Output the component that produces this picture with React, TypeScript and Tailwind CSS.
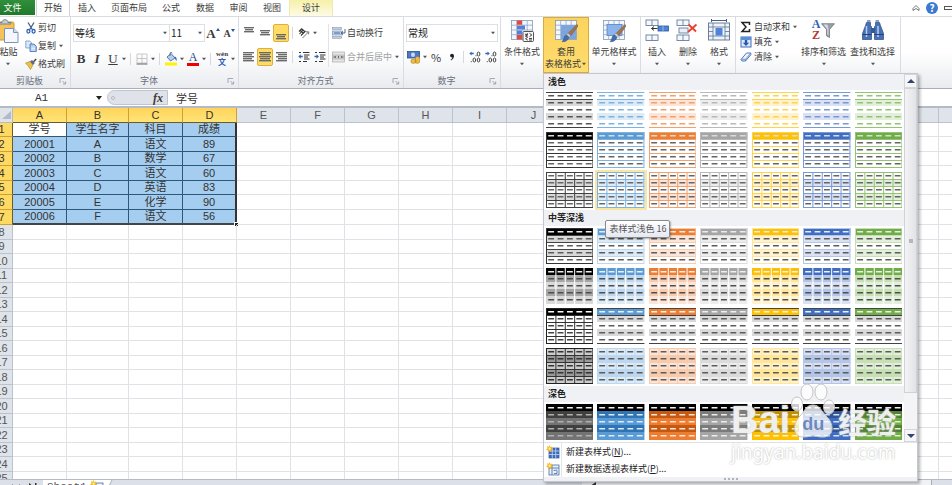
import React from 'react';
import clsx from 'clsx';

interface Palette {
  name: string;
  base: string;
  light: string;
  mid: string;
  strong: string;
  dark: string;
}

interface ThumbStyle {
  header?: string;
  bandA?: string;
  bandB?: string;
  rows?: string;
  cols?: string;
  outer?: string;
  edge?: string;
  headDash: string;
  dash: string;
}

type Kind = 'light1' | 'light2' | 'light3' | 'medium1' | 'medium2' | 'medium3' | 'medium4' | 'dark1';

const palettes: Palette[] = [
  { name: '黑色', base: '#000000', light: '#d9d9d9', mid: '#bfbfbf', strong: '#404040', dark: '#404040' },
  { name: '蓝色', base: '#5b9bd5', light: '#ddebf7', mid: '#bdd7ee', strong: '#7db3e2', dark: '#2f75b5' },
  { name: '橙色', base: '#ed7d31', light: '#fce4d6', mid: '#f8cbad', strong: '#f2a06c', dark: '#c65911' },
  { name: '灰色', base: '#a5a5a5', light: '#ededed', mid: '#dbdbdb', strong: '#b9b9b9', dark: '#7b7b7b' },
  { name: '金色', base: '#ffc000', light: '#fff2cc', mid: '#ffe699', strong: '#ffd34d', dark: '#bf8f00' },
  { name: '深蓝', base: '#3f6dc3', light: '#d9e1f2', mid: '#b4c6e7', strong: '#7998d6', dark: '#305496' },
  { name: '绿色', base: '#70ad47', light: '#e2efda', mid: '#c6e0b4', strong: '#93c472', dark: '#548235' },
];

const sections: { title: string; kinds: Kind[] }[] = [
  { title: '浅色', kinds: ['light1', 'light2', 'light3'] },
  { title: '中等深浅', kinds: ['medium1', 'medium2', 'medium3', 'medium4'] },
  { title: '深色', kinds: ['dark1'] },
];

const getThumbStyle = (kind: Kind, p: Palette): ThumbStyle => {
  const black = p.base === '#000000';
  switch (kind) {
    case 'light1':
      return { bandA: p.light, edge: p.strong, headDash: black ? '#555' : p.strong, dash: black ? '#555' : p.strong };
    case 'light2':
      return { header: p.base, rows: black ? '#333' : p.strong, outer: black ? '#333' : p.strong, headDash: '#d6dbe0', dash: '#666' };
    case 'light3':
      return { bandA: p.light, rows: p.strong, cols: p.strong, outer: p.strong, headDash: '#666', dash: '#666' };
    case 'medium1':
      return { header: p.base, bandA: p.light, rows: black ? '#444' : p.mid, outer: black ? '#333' : p.mid, headDash: '#e8ecf0', dash: '#5c5c5c' };
    case 'medium2':
      return { header: p.base, bandA: black ? '#a6a6a6' : p.mid, bandB: p.light, cols: '#ffffff', headDash: '#f0f0f0', dash: '#4f4f4f' };
    case 'medium3':
      return black
        ? { header: '#000', rows: '#333', cols: '#333', outer: '#222', headDash: '#fff', dash: '#444' }
        : { header: p.base, bandA: '#d9d9d9', edge: '#444', headDash: '#f0f0f0', dash: '#5c5c5c' };
    case 'medium4':
      return black
        ? { header: '#ccc', bandA: '#999', bandB: '#ccc', rows: '#333', cols: '#333', outer: '#222', headDash: '#333', dash: '#333' }
        : { header: p.light, bandA: p.mid, bandB: p.light, rows: p.mid, cols: p.mid, outer: p.mid, headDash: '#5c5c5c', dash: '#5c5c5c' };
    default:
      return { header: '#000', bandA: p.dark, bandB: black ? '#737373' : p.base, headDash: '#f0f0f0', dash: black ? '#b0b0b0' : p.light };
  }
};

const Thumb: React.FC<{ style: ThumbStyle }> = ({ style: s }) => (
  <svg viewBox="0 0 47 36" preserveAspectRatio="none" className="block h-9 w-full" aria-hidden="true">
    <rect width="47" height="36" fill="#fff" />
    {[0, 1, 2, 3, 4].map(r => {
      const fill = r === 0 ? s.header : r % 2 === 1 ? s.bandA : s.bandB;
      return fill ? <rect key={r} y={r * 7} width="47" height={r === 4 ? 8 : 7} fill={fill} /> : null;
    })}
    {s.rows && [7, 14, 21, 28].map(y => <rect key={y} y={y} width="47" height="1" fill={s.rows} />)}
    {s.cols && [1, 2, 3, 4].map(c => <rect key={c} x={c * 9.3} y={s.cols === '#333' && s.header === '#000' ? 7 : 0} width="1" height="36" fill={s.cols} />)}
    {s.outer && <rect x="0.5" y="0.5" width="46" height="35" fill="none" stroke={s.outer} />}
    {s.edge && [0, 7, 35].map(y => <rect key={y} y={y} width="47" height="1" fill={s.edge} />)}
    {[0, 1, 2, 3, 4].map(r =>
      [0, 1, 2, 3, 4].map(c => (
        <rect key={`${r}-${c}`} x={2.2 + c * 9.3} y={r * 7 + 3} width="5.8" height="1.5" fill={r === 0 ? s.headDash : s.dash} />
      ))
    )}
  </svg>
);

/* ---------- small shared pieces ---------- */

const Caret = ({ className }: { className?: string }) => (
  <svg viewBox="0 0 6 4" className={clsx('h-1 w-1.5 shrink-0', className)} aria-hidden="true">
    <path d="M1 .8h4L3 3.2z" fill="#555" />
  </svg>
);

const Sep = () => <span className="mx-[3px] h-3 w-px shrink-0 bg-[#d5d8dd]" />;

const ToolButton: React.FC<{ label: string; active?: boolean; children: React.ReactNode }> = ({ label, active, children }) => (
  <button
    type="button"
    aria-label={label}
    className={clsx(
      'flex h-[18px] w-4 shrink-0 items-center justify-center rounded-[2px]',
      active && 'border border-[#dfae3c] bg-[#ffdc66]'
    )}
  >
    {children}
  </button>
);

const SmallButton: React.FC<{ icon: React.ReactNode; label: string; caret?: boolean; muted?: boolean; className?: string }> = ({ icon, label, caret, muted, className }) => (
  <button type="button" className={clsx('flex items-center whitespace-nowrap', muted && 'text-[#a0a0a0]', className)}>
    {icon}
    <span>{label}</span>
    {caret && <Caret className="ml-0.5" />}
  </button>
);

const BigButton: React.FC<{ icon: React.ReactNode; label: string; className?: string }> = ({ icon, label, className }) => (
  <button type="button" className={clsx('flex h-full shrink-0 flex-col items-center whitespace-nowrap pt-0.5 leading-[12px]', className)}>
    {icon}
    <span className="mt-[3px]">{label}</span>
    <Caret className="mt-1" />
  </button>
);

const Group: React.FC<{ title?: string; className?: string; children: React.ReactNode }> = ({ title, className, children }) => (
  <div className={clsx('flex shrink-0 flex-col border-r border-[#d9dce1]', className)}>
    <div className="flex h-14">{children}</div>
    <div className="flex h-[15px] items-center text-[#68707c]">
      {title && (
        <>
          <span className="flex-1 text-center">{title}</span>
          <button type="button" aria-label={`${title}选项`} className="w-[11px]">
            <svg viewBox="0 0 8 8" className="h-2 w-2" aria-hidden="true">
              <path d="M1 6V1.5h5M3.5 4l3 3M6.7 4.5V7H4" fill="none" stroke="#9aa1ac" strokeWidth=".9" />
            </svg>
          </button>
        </>
      )}
    </div>
  </div>
);

const Picker: React.FC<{ label: string; options: string[]; className?: string }> = ({ label, options, className }) => (
  <span className={clsx('relative flex h-[18px] border border-[#dcdfe4] bg-white', className)}>
    <select aria-label={label} className="w-full appearance-none bg-transparent pl-px text-[10px] leading-none text-[#222] outline-none">
      {options.map(o => (
        <option key={o}>{o}</option>
      ))}
    </select>
    <Caret className="pointer-events-none absolute right-px top-1.5" />
  </span>
);

/* ---------- icons ---------- */

const CutIcon = () => (
  <svg viewBox="0 0 12 12" className="mr-px h-3 w-3" aria-hidden="true">
    <path d="M3 .5 7.6 8M9 .5 4.4 8" stroke="#4b5f80" strokeWidth="1.3" fill="none" />
    <ellipse cx="3.4" cy="9.3" rx="1.5" ry="1.8" fill="none" stroke="#2f66c0" strokeWidth="1.3" />
    <ellipse cx="8.6" cy="9.3" rx="1.5" ry="1.8" fill="none" stroke="#2f66c0" strokeWidth="1.3" />
  </svg>
);

const CopyIcon = () => (
  <svg viewBox="0 0 12 12" className="mr-px h-3 w-3" aria-hidden="true">
    <path d="M.8 1h4l1.7 1.7V8H.8z" fill="#dce9f8" stroke="#6f94c8" strokeWidth=".8" />
    <path d="M5 4h4l2.3 2.3v5.2H5z" fill="#a9c8ee" stroke="#3f6fb4" strokeWidth=".8" />
    <path d="M6.2 7h3.8M6.2 8.5h3.8M6.2 10h3.8" stroke="#fff" strokeWidth=".7" />
  </svg>
);

const BrushIcon = () => (
  <svg viewBox="0 0 12 12" className="mr-px h-3 w-3" aria-hidden="true">
    <path d="M.5 5 5 3.5l3 3.5-2.5 4.5C4 9 2.5 7 .5 5z" fill="#eac24a" stroke="#a8862a" strokeWidth=".6" />
    <path d="M5 3.5 7 2l2.8 3L8 7z" fill="#626b7b" />
    <path d="m8 3.2 2.7-2.7 1 1-2.6 2.8z" fill="#3c4352" />
  </svg>
);

const PasteIcon = () => (
  <svg viewBox="0 0 24 24" className="h-6 w-6 shrink-0" aria-hidden="true">
    <rect x="0" y="3" width="19" height="18" rx="1.5" fill="#f3c35a" stroke="#c99833" />
    <path d="M4 5h12V3.5h-3C13 1.5 11.5.7 10 .7S7 1.5 7 3.5H4z" fill="#c4cbd5" stroke="#6f7a8a" strokeWidth=".9" />
    <path d="M9.5 9.5h9l4.5 4v10H9.5z" fill="#f4f8fd" stroke="#7d94b4" />
    <path d="M18.5 9.5v4H23" fill="#cfdcec" stroke="#7d94b4" />
  </svg>
);

const Lines = ({ top, widths }: { top: number; widths: number[][] }) => (
  <svg viewBox="0 0 12 14" className="h-[14px] w-3" aria-hidden="true">
    {widths.map(([x, w], i) => (
      <rect key={i} x={x} y={top + i * 2} width={w} height="1.4" fill="#6a6a6a" />
    ))}
  </svg>
);

const OrientIcon = () => (
  <svg viewBox="0 0 12 12" className="h-3 w-3" aria-hidden="true">
    <path d="M1 4.5 4 1.5M1.5 7l3.5-4M3 8.5 7.5 4M2 3l3 3M4 1.8 7 5" stroke="#333" strokeWidth="1.1" fill="none" />
    <path d="M4.5 11 10.5 5M8 4.8h2.7v2.6" stroke="#777" fill="none" />
  </svg>
);

const WrapIcon = () => (
  <svg viewBox="0 0 14 12" className="mr-px h-3 w-[14px]" aria-hidden="true">
    <rect x=".5" y=".5" width="9" height="2" fill="#c9d0da" stroke="#7d8897" strokeWidth=".5" />
    <rect x=".5" y="4" width="10" height="4" fill="#bcd4f1" stroke="#5e88bf" strokeWidth=".6" />
    <rect x=".5" y="9.3" width="9" height="2" fill="#c9d0da" stroke="#7d8897" strokeWidth=".5" />
    <path d="M2 6h6M13 2v4h-3.5M10.7 4.5 9 6l1.7 1.5" stroke="#41597d" fill="none" strokeWidth=".9" />
  </svg>
);

const MergeIcon = () => (
  <svg viewBox="0 0 14 12" className="mr-px h-3 w-[14px]" aria-hidden="true">
    <rect x=".5" y="1" width="12" height="10" fill="#e6e6e6" stroke="#aaa" strokeWidth=".7" />
    <rect x=".5" y="4" width="12" height="4" fill="#cfcfcf" stroke="#aaa" strokeWidth=".6" />
    <path d="M1.5 6H4M9 6h2.5M3.3 5v2M9.7 5v2" stroke="#666" fill="none" strokeWidth=".9" />
    <path d="M6.5 5v2.2" stroke="#666" />
  </svg>
);

const IndentIcon = ({ right }: { right?: boolean }) => (
  <svg viewBox="0 0 12 12" className="h-3 w-3" aria-hidden="true">
    <path d="M1 1.5h2M5 1.5h6.5M6 4h5.5M6 6h4M6 8h5.5M1 10.5h2M5 10.5h4" stroke="#333" strokeWidth="1.2" />
    <path d={right ? 'M5 5.5 2.5 3.3v1.5H.5v1.5h2v1.5z' : 'M.3 5.5l2.5-2.2v1.5h2v1.5h-2v1.5z'} fill="#2f66c0" />
  </svg>
);

const BorderIcon = () => (
  <svg viewBox="0 0 12 12" className="h-3 w-3" aria-hidden="true">
    <path d="M1 1h10v9H1zM6 1v9M1 5.5h10" stroke="#bbb" strokeWidth=".8" fill="none" />
    <path d="M.5 11h11" stroke="#666" />
  </svg>
);

const FillIcon = () => (
  <svg viewBox="0 0 14 14" className="h-[14px] w-[14px] shrink-0" aria-hidden="true">
    <path d="M3 5 7 1.5 11 6 6.5 9z" fill="#b9cde9" stroke="#3d5e94" strokeWidth=".8" />
    <path d="M6 4V1.3C6 0 8 0 8 1.3" stroke="#3d5e94" fill="none" strokeWidth=".8" />
    <path d="M10.5 4.5c2 .5 2.5 2 2 4.5-1-1-1.5-2-2-4.5z" fill="#2f66c0" />
    <rect x="1" y="10.5" width="12" height="3" fill="#fff200" />
  </svg>
);

const CurrencyIcon = () => (
  <svg viewBox="0 0 14 14" className="h-[14px] w-[14px] shrink-0" aria-hidden="true">
    <rect x=".5" y="1.5" width="12" height="6.5" fill="#4d79c4" stroke="#2b4f94" strokeWidth=".8" />
    <ellipse cx="6" cy="4.7" rx="2" ry="2.2" fill="#c8d9f3" />
    <path d="M4 10c0-1 5-1 5 0v2.5c0 1-5 1-5 0zM8.5 7.5c0-1 4-1 4 0v5c0 1-4 1-4 0z" fill="#eebc45" stroke="#b0801d" strokeWidth=".6" />
  </svg>
);

const DecimalIcon = ({ less }: { less?: boolean }) => (
  <svg viewBox="0 0 12 12" className="h-3 w-3" aria-hidden="true">
    <path d={less ? 'M4.8 2.5 2.5.5v1.3H.3v1.4h2.2v1.3z' : 'M.3 2.5 2.6.5v1.3h2.2v1.4H2.6v1.3z'} fill="#2f66c0" />
    <ellipse cx="9.5" cy="3" rx="1.4" ry="2" fill="none" stroke="#444" />
    <ellipse cx="5.3" cy="9" rx="1.3" ry="2" fill="none" stroke="#444" />
    <ellipse cx="9.5" cy="9" rx="1.3" ry="2" fill="none" stroke="#444" />
    <rect x="6.5" y="4.2" width="1" height="1" fill="#444" />
    <rect x="1.8" y="10.2" width="1" height="1" fill="#444" />
  </svg>
);

const Sheet = ({ accent }: { accent?: boolean }) => (
  <>
    <rect x="1.5" y="1.5" width="21" height="19" fill="#f4f8fd" stroke="#8699b5" strokeWidth=".8" />
    {accent && <rect x="7" y="6" width="15" height="14" fill="#78a5e2" />}
    <path d="M6.7 1.5v19M12 1.5v19M17.2 1.5v19M1.5 6.2h21M1.5 11h21M1.5 15.7h21" stroke="#8fa6c6" strokeWidth=".8" />
  </>
);

const Paintbrush = () => (
  <>
    <path d="m23 5.5-9 9 2.5 2.5 7.5-10z" fill="#a8744a" stroke="#6d4a30" strokeWidth=".5" />
    <path d="m14 14 2.8 2.8-2 2-3-2.7z" fill="#c9ced6" stroke="#717a88" strokeWidth=".5" />
    <path d="M11.7 16.2c2 0 3.2 1.4 3 2.9-1.2 3-4.2 3.9-6.7 3.5 2.2-1.6 1.5-5 3.7-6.4z" fill="#416fae" stroke="#2c4e80" strokeWidth=".5" />
  </>
);

const CondIcon = () => (
  <svg viewBox="0 0 24 24" className="h-6 w-6" aria-hidden="true">
    <Sheet />
    <path d="M7 1.5h5v9H7zM7 16h5v4.5H7z" fill="#e2483c" />
    <path d="M7 6.5h8v4H7zM7 11h5v4.5H7z" fill="#4f82d8" />
    <path d="M7 6.2h5M12 11h-5" stroke="#fff" strokeWidth=".6" />
    <rect x="13" y="12.5" width="10.5" height="10" rx="1" fill="#f6f6f6" stroke="#555" />
    <path d="M15 15.3h3M15 17h3M16 18l1.5-3.600M19.5 14.3l2.300 1.700-2.300 1.700M17.800 18.400 15.500 19.700l2.300 1.500M19 19.500h3M19 21h3" stroke="#333" fill="none" strokeWidth=".9" />
  </svg>
);

const TableIcon = () => (
  <svg viewBox="0 0 24 24" className="h-6 w-6" aria-hidden="true">
    <Sheet accent />
    <Paintbrush />
  </svg>
);

const CellStyleIcon = () => (
  <svg viewBox="0 0 24 24" className="h-6 w-6" aria-hidden="true">
    <Sheet />
    <rect x="5" y="5.5" width="15" height="11" fill="#8bb4ec" stroke="#5a83bf" strokeWidth=".8" />
    <Paintbrush />
  </svg>
);

const MiniSheets = () => (
  <>
    {[1, 16].map(y => (
      <g key={y}>
        <rect x="1" y={y} width="12" height="5.5" fill="#f4f8fd" stroke="#6b7f9c" strokeWidth=".9" />
        <path d={`M7 ${y}v5.5`} stroke="#6b7f9c" strokeWidth=".9" />
      </g>
    ))}
  </>
);

const InsertIcon = () => (
  <svg viewBox="0 0 24 24" className="h-6 w-6" aria-hidden="true">
    <MiniSheets />
    <rect x="13" y="7" width="10.5" height="5" fill="#4f82d8" stroke="#2f5597" strokeWidth=".8" />
    <path d="M18 7v5" stroke="#bcd2f4" strokeWidth=".7" />
    <path d="M12.5 9.5H6.5M9 7.5l-2.5 2L9 11.5" stroke="#333" fill="none" />
  </svg>
);

const DeleteIcon = () => (
  <svg viewBox="0 0 24 24" className="h-6 w-6" aria-hidden="true">
    <MiniSheets />
    <rect x="3" y="9" width="9" height="5" fill="#e9eff8" stroke="#6b7f9c" strokeWidth=".9" />
    <path d="M12.5 5.5 20 12.5M20.5 5.5 12 13" stroke="#e8412f" strokeWidth="1.9" />
  </svg>
);

const FormatIcon = () => (
  <svg viewBox="0 0 24 24" className="h-6 w-6" aria-hidden="true">
    <path d="M4.5 0v3M19.5 0v3M4.5 1.5h15" stroke="#4b5f80" />
    <rect x="1.5" y="4" width="21" height="17" fill="#eef3fa" stroke="#6b7f9c" />
    <path d="M6 4v17M18 4v17M1.5 8h21M1.5 17h21M1.5 12.5H6M18 12.5h4.5" stroke="#6b7f9c" strokeWidth=".9" />
    <rect x="8.5" y="9" width="7" height="7.5" fill="#4f82d8" />
  </svg>
);

const SortIcon = () => (
  <span className="flex h-6 w-6 font-['Liberation_Serif',serif] text-[12px] font-bold leading-[11px]" aria-hidden="true">
    <span className="flex w-[9px] shrink-0 flex-col">
      <span className="text-[#2f5fb5]">A</span>
      <span className="text-[#b33a34]">Z</span>
    </span>
    <svg viewBox="0 0 14 16" className="mt-1 h-4 w-[14px] shrink-0">
      <path d="M.5.7h13l-5 5.8v8l-3-1.7V6.5z" fill="#9aa0a8" stroke="#646a73" strokeWidth=".7" />
      <path d="M2.500 1.400h4l1 5v6l-1.200-.8V6.200z" fill="#d6d9dd" />
    </svg>
  </span>
);

const FindIcon = () => (
  <svg viewBox="0 0 24 24" className="h-6 w-6" aria-hidden="true">
    <path d="M5.5 3.5h4v3l1 1v13h-9v-6l3-8z" fill="#4771b6" stroke="#2b4a82" strokeWidth=".7" />
    <path d="M18.5 3.5h-4v3l-1 1v13h9v-6l-3-8z" fill="#4771b6" stroke="#2b4a82" strokeWidth=".7" />
    <rect x="10" y="9" width="4" height="5" fill="#34588f" />
    <path d="M5.5 7v11M17 7v11" stroke="#b5cbee" strokeWidth="1.5" />
    <path d="M1.5 15.5h9M13.5 15.5h9M6 2h3.5M14.5 2H18" stroke="#24406f" />
  </svg>
);

const SumIcon = () => (
  <svg viewBox="0 0 12 12" className="mr-[2px] h-3 w-3" aria-hidden="true">
    <path d="M9.5 4V1.5H2L6 6l-4 4.5h7.5V8" stroke="#222" strokeWidth="1.5" fill="none" />
  </svg>
);

const FillDownIcon = () => (
  <svg viewBox="0 0 12 12" className="mr-[2px] h-3 w-3" aria-hidden="true">
    <rect x="1" y="1" width="10" height="10" fill="#dce8f8" stroke="#3f6fb4" />
    <rect x="1" y="1" width="10" height="3" fill="#5a8edb" />
    <path d="M6 10 2.8 6.8h2V4h2.4v2.8h2z" fill="#2458b8" />
  </svg>
);

const EraserIcon = () => (
  <svg viewBox="0 0 12 12" className="mr-[2px] h-3 w-3" aria-hidden="true">
    <path d="M1 8.5 6.5 2h4.3v1.8L5.5 10H2z" fill="#eef4fb" stroke="#4f78b8" />
    <path d="M1.5 8.3h4L10.5 2.5M5.5 8.5V10" stroke="#4f78b8" fill="none" strokeWidth=".8" />
  </svg>
);

const NewStyleIcon = ({ pivot }: { pivot?: boolean }) => (
  <svg viewBox="0 0 14 14" className="h-[14px] w-[14px] shrink-0" aria-hidden="true">
    <rect x="3" y="3" width="10" height="10" fill={pivot ? '#eaf1fb' : '#3f6dc3'} stroke="#35588f" strokeWidth=".7" />
    {pivot ? (
      <path d="M3 6h10M6 3v10M8 11.5h3v-3M7.5 8.5 11 8" stroke="#4f78b8" fill="none" strokeWidth=".9" />
    ) : (
      <path d="M3 6h10M3 9.5h10M6.3 3v10M9.7 3v10" stroke="#c4d7f5" strokeWidth=".8" />
    )}
    <path d="m3.5 0 .8 2 2-.6-.8 1.9 1.7 1-2 .7.3 2-1.9-1L2 7.3 1.8 5.2 0 4.5l1.6-1.2L.8 1.3l2 .5z" fill="#f5b91e" />
    <circle cx="3.6" cy="3.7" r="1.1" fill="#fff3b0" />
  </svg>
);

/* ---------- style gallery ---------- */

const StyleGallery = () => (
  <div
    role="menu"
    className="absolute left-0 top-full z-20 flex w-[375px] flex-col border border-[#c3c7cf] bg-white text-[#222] shadow-[2px_2px_3px_rgba(0,0,0,0.3)]"
  >
    <div className="flex">
      <div className="flex-1">
        {sections.map(section => (
          <section key={section.title}>
            <h3 className="h-4 bg-[#f0f1f5] pl-1 font-bold leading-4">{section.title}</h3>
            <div className="grid grid-cols-7 gap-1 px-0.5 py-0.5">
              {section.kinds.map(kind =>
                palettes.map((p, i) => {
                  const hovered = kind === 'light3' && i === 1;
                  return (
                    <div key={kind + p.name} className="relative">
                      <button
                        type="button"
                        aria-label={`${section.title} ${p.name}`}
                        className={clsx('block w-full', hovered && 'outline-2 outline-[#fbe8a0]')}
                      >
                        <Thumb style={getThumbStyle(kind, p)} />
                      </button>
                      {hovered && (
                        <span
                          role="tooltip"
                          className="absolute left-2 top-12 z-10 whitespace-nowrap rounded-[2px] border border-[#8a8a8a] bg-linear-to-b from-white to-[#e6e8f2] px-[3px] leading-4 text-[#555] shadow-[1px_1px_2px_rgba(0,0,0,0.3)]"
                        >
                          表样式浅色 16
                        </span>
                      )}
                    </div>
                  );
                })
              )}
            </div>
          </section>
        ))}
      </div>
      <div className="flex w-[13px] flex-col bg-[#f4f4f6]">
        <button type="button" aria-label="向上滚动" className="flex h-[14px] items-center justify-center border border-[#d4d6da] bg-[#f6f6f8]">
          <svg viewBox="0 0 8 4" className="h-1 w-2"><path d="M4 0l4 4H0z" fill="#33456b" /></svg>
        </button>
        <div className="flex flex-1 items-center justify-center border border-[#cfd2d8] bg-linear-to-r from-[#f4f4f6] to-[#e2e3e6]">
          <span className="h-1 w-1 bg-[#b5b7bb]" />
        </div>
        <div className="h-9" />
        <button type="button" aria-label="向下滚动" className="flex h-[13px] items-center justify-center border border-[#d4d6da] bg-[#f6f6f8]">
          <svg viewBox="0 0 8 4" className="h-1 w-2"><path d="M0 0h8L4 4z" fill="#33456b" /></svg>
        </button>
      </div>
    </div>
    <div className="flex flex-col border-t border-[#e0e2e6]">
      <button type="button" role="menuitem" className="flex h-[17px] items-center pl-0.5">
        <NewStyleIcon />
        <span className="ml-px flex h-full items-center border-l border-[#e2e4e8] pl-1">新建表样式(<u>N</u>)...</span>
      </button>
      <button type="button" role="menuitem" className="flex h-[17px] items-center pl-0.5">
        <NewStyleIcon pivot />
        <span className="ml-px flex h-full items-center border-l border-[#e2e4e8] pl-1">新建数据透视表样式(<u>P</u>)...</span>
      </button>
    </div>
    <div className="flex h-1 items-center justify-center gap-0.5 bg-[#f0f1f5]">
      {[0, 1, 2, 3].map(i => (
        <span key={i} className="h-0.5 w-0.5 bg-[#aeb3bc]" />
      ))}
    </div>
  </div>
);

/* ---------- ribbon ---------- */

const tabs = [
  { label: '插入', width: 'w-[34px]' },
  { label: '页面布局', width: 'w-[50px]' },
  { label: '公式', width: 'w-[34px]' },
  { label: '数据', width: 'w-[34px]' },
  { label: '审阅', width: 'w-[33px]' },
  { label: '视图', width: 'w-[34px]' },
];

const TabBar = () => (
  <nav className="flex h-4 shrink-0 items-stretch bg-white leading-[14px]">
    <button type="button" className="mb-px w-[35px] shrink-0 bg-linear-to-b from-[#2f8f3a] to-[#1f7a2c] pr-2.5 text-white">文件</button>
    <button type="button" className="ml-px w-[34px] shrink-0 border-x border-[#d0d4da]">开始</button>
    {tabs.map(t => (
      <button key={t.label} type="button" className={clsx('shrink-0', t.width)}>{t.label}</button>
    ))}
    <button type="button" className="w-11 shrink-0 border-x border-[#f0e9b0] bg-linear-to-b from-[#f6f0a8] to-[#fdfbe6]">设计</button>
    <div className="ml-auto flex items-center gap-1.5">
      <button type="button" aria-label="最小化功能区">
        <svg viewBox="0 0 8 8" className="h-2 w-2"><path d="M1 4.5 4 1.5l3 3v2L4 4.5l-3 2z" fill="#fff" stroke="#555" strokeWidth=".8" /></svg>
      </button>
      <button type="button" aria-label="帮助" className="h-3 w-3 rounded-full bg-[#3b78cf] text-center text-[10px] font-bold leading-3 text-white">?</button>
      <button type="button" aria-label="最小化" className="h-1 w-2 border border-r-0 border-[#555]" />
    </div>
  </nav>
);

const Ribbon = () => (
  <div className="relative z-10 flex shrink-0 border-y border-t-[#d8dbe0] border-b-[#a9aeb8] bg-linear-to-b from-white from-50% to-[#e9ebef]">
    <Group title="剪贴板" className="w-[71px]">
      <button type="button" className="flex w-[22px] shrink-0 flex-col items-center pt-0.5 leading-[12px]">
        <span className="-ml-2 block h-6"><PasteIcon /></span>
        <span className="-ml-[5px] mt-[3px] whitespace-nowrap">粘贴</span>
        <Caret className="-ml-1.5 mt-1" />
      </button>
      <div className="ml-[3px] flex flex-col pt-0.5">
        <SmallButton icon={<CutIcon />} label="剪切" className="h-[18px]" />
        <SmallButton icon={<CopyIcon />} label="复制" caret className="h-[18px]" />
        <SmallButton icon={<BrushIcon />} label="格式刷" className="h-[18px]" />
      </div>
    </Group>

    <Group title="字体" className="w-[168px]">
      <div className="flex flex-col gap-1.5 pl-0.5 pt-[7px]">
        <div className="flex">
          <Picker label="字体" options={['等线', '宋体']} className="w-[97px]" />
          <Picker label="字号" options={['11', '12', '14']} className="w-[35px] border-l-0" />
          <button type="button" aria-label="增大字号" className="flex w-4 items-center justify-center font-['Liberation_Serif',serif] text-[13px] font-bold">
            A<svg viewBox="0 0 4 4" className="mb-2 h-1 w-1"><path d="M2 0l2 3H0z" fill="#2f5597" /></svg>
          </button>
          <button type="button" aria-label="减小字号" className="flex w-4 items-center justify-center font-['Liberation_Serif',serif] text-[10px] font-bold">
            A<svg viewBox="0 0 4 4" className="mb-2 h-1 w-1"><path d="M0 1h4L2 4z" fill="#2f5597" /></svg>
          </button>
        </div>
        <div className="flex items-center font-['Liberation_Serif','Noto_Sans_CJK_SC',serif]">
          <ToolButton label="加粗"><b className="text-[13px]">B</b></ToolButton>
          <ToolButton label="倾斜"><i className="text-[13px] font-bold">I</i></ToolButton>
          <ToolButton label="下划线"><u className="text-[13px]">U</u></ToolButton>
          <Caret />
          <Sep />
          <ToolButton label="边框"><BorderIcon /></ToolButton>
          <Caret />
          <Sep />
          <ToolButton label="填充颜色"><FillIcon /></ToolButton>
          <Caret />
          <ToolButton label="字体颜色">
            <span className="w-3 border-b-[3px] border-[#f00000] text-center text-[12px] leading-[11px] text-[#274b8f]">A</span>
          </ToolButton>
          <Caret />
          <Sep />
          <ToolButton label="拼音指南">
            <span className="flex flex-col items-center font-bold">
              <span className="text-[7px] leading-[8px]">wén</span>
              <span className="text-[8px] leading-[9px] text-[#2f5fb5]">文</span>
            </span>
          </ToolButton>
          <Caret />
        </div>
      </div>
    </Group>

    <Group title="对齐方式" className="w-[165px]">
      <div className="flex flex-col gap-1.5 pl-0.5 pt-[7px]">
        <div className="flex items-center">
          <ToolButton label="顶端对齐"><Lines top={1} widths={[[1, 10], [2, 8], [1, 10]]} /></ToolButton>
          <ToolButton label="垂直居中"><Lines top={4} widths={[[1, 10], [2, 8], [1, 10]]} /></ToolButton>
          <ToolButton label="底端对齐" active><Lines top={8} widths={[[1, 10], [2, 8], [1, 10]]} /></ToolButton>
          <Sep />
          <ToolButton label="方向"><OrientIcon /></ToolButton>
          <Caret />
        </div>
        <div className="flex items-center">
          <ToolButton label="左对齐"><Lines top={2} widths={[[0, 11], [0, 9], [0, 11], [0, 9], [0, 11]]} /></ToolButton>
          <ToolButton label="居中" active><Lines top={2} widths={[[0, 12], [1, 10], [0, 12], [1, 10], [0, 12]]} /></ToolButton>
          <ToolButton label="右对齐"><Lines top={2} widths={[[1, 11], [3, 9], [1, 11], [3, 9], [1, 11]]} /></ToolButton>
          <Sep />
          <ToolButton label="减少缩进量"><IndentIcon /></ToolButton>
          <ToolButton label="增加缩进量"><IndentIcon right /></ToolButton>
        </div>
      </div>
      <div className="mb-1.5 mt-[7px] flex flex-col gap-1.5 border-l border-[#e1e3e7] pl-[3px]">
        <SmallButton icon={<WrapIcon />} label="自动换行" className="h-[18px]" />
        <SmallButton icon={<MergeIcon />} label="合并后居中" caret muted className="h-[18px]" />
      </div>
    </Group>

    <Group title="数字" className="w-[97px]">
      <div className="flex flex-col gap-1.5 pl-0.5 pt-[7px]">
        <Picker label="数字格式" options={['常规', '数值', '货币']} className="w-[92px]" />
        <div className="flex items-center">
          <ToolButton label="会计数字格式"><CurrencyIcon /></ToolButton>
          <Caret />
          <ToolButton label="百分比样式"><span className="text-[11px]">%</span></ToolButton>
          <ToolButton label="千位分隔样式">
            <svg viewBox="0 0 6 8" className="h-2 w-1.5">
              <circle cx="3" cy="2.6" r="1.9" fill="#222" />
              <path d="M4.9 2.6C4.9 5 4 6.5 2 7.4l-.4-.6C3 6 3.4 5 3.3 4z" fill="#222" />
            </svg>
          </ToolButton>
          <Sep />
          <ToolButton label="增加小数位数"><DecimalIcon /></ToolButton>
          <ToolButton label="减少小数位数"><DecimalIcon less /></ToolButton>
        </div>
      </div>
    </Group>

    <Group className="w-[140px]">
      <BigButton icon={<CondIcon />} label="条件格式" className="w-[42px]" />
      <div className="relative h-full">
        <button
          type="button"
          aria-expanded="true"
          className="flex h-full w-[46px] flex-col items-center whitespace-nowrap border border-[#d9ab3f] bg-linear-to-b from-[#fbd45f] to-[#ffdc6e] pt-px leading-[12px]"
        >
          <TableIcon />
          <span className="mt-[3px]">套用</span>
          <span className="flex items-center">表格格式<Caret /></span>
        </button>
        <StyleGallery />
      </div>
      <BigButton icon={<CellStyleIcon />} label="单元格样式" className="w-[50px]" />
    </Group>

    <Group className="w-[95px]">
      <BigButton icon={<InsertIcon />} label="插入" className="w-8" />
      <BigButton icon={<DeleteIcon />} label="删除" className="w-[30px]" />
      <BigButton icon={<FormatIcon />} label="格式" className="w-8" />
    </Group>

    <Group className="w-[165px]">
      <div className="flex w-[63px] shrink-0 flex-col pl-1 pt-0.5">
        <SmallButton icon={<SumIcon />} label="自动求和" caret className="h-[15px]" />
        <SmallButton icon={<FillDownIcon />} label="填充" caret className="h-[15px]" />
        <SmallButton icon={<EraserIcon />} label="清除" caret className="h-[15px]" />
      </div>
      <BigButton icon={<SortIcon />} label="排序和筛选" className="w-[49px]" />
      <BigButton icon={<FindIcon />} label="查找和选择" className="w-[49px]" />
    </Group>
  </div>
);

const FormulaBar = () => (
  <div className="flex h-[19px] shrink-0 items-center border-b-2 border-[#b4bac6] bg-white text-[11px]">
    <input
      aria-label="名称框"
      defaultValue="A1"
      className="h-full w-[83px] shrink-0 text-center font-['Liberation_Mono',monospace] text-[11px] text-[#333] outline-none"
    />
    <svg viewBox="0 0 6 4" className="ml-[13px] h-1 w-1.5 shrink-0" aria-hidden="true"><path d="M0 0h6L3 4z" fill="#222" /></svg>
    <div className="ml-[5px] flex h-[15px] w-[61px] shrink-0 items-center justify-between rounded-l-full border border-[#c0c6d0] bg-[#dfe2e8] pl-[3px] pr-1">
      <span className="h-1 w-1 rounded-full border border-[#b3b9c4] bg-[#e9ebef]" />
      <button type="button" aria-label="插入函数" className="font-['Liberation_Serif',serif] text-[12px] font-bold italic leading-none">fx</button>
    </div>
    <input
      aria-label="编辑栏"
      defaultValue="学号"
      className="h-full min-w-0 flex-1 pl-2 font-['Liberation_Sans','Noto_Sans_CJK_SC',sans-serif] text-[11px] text-[#333] outline-none"
    />
  </div>
);

/* ---------- worksheet ---------- */

const columns = 'ABCDEFGHIJKLMNOPQR'.split('');
const rowCount = 25;

const data = [
  ['学号', '学生名字', '科目', '成绩'],
  ['20001', 'A', '语文', '89'],
  ['20002', 'B', '数学', '67'],
  ['20003', 'C', '语文', '60'],
  ['20004', 'D', '英语', '83'],
  ['20005', 'E', '化学', '90'],
  ['20006', 'F', '语文', '56'],
];

const Worksheet = () => (
  <div className="min-h-0 flex-1 overflow-hidden bg-white">
    <table className="-ml-[9px] w-max table-fixed border-separate border-spacing-0 text-center font-['Liberation_Sans','Noto_Sans_CJK_SC',sans-serif] text-[11px] leading-[13px] text-[#333]">
      <colgroup>
        <col className="w-[22px]" />
        {columns.map(c => (
          <col key={c} className={c === 'B' ? 'w-[62px]' : 'w-[54px]'} />
        ))}
      </colgroup>
      <thead>
        <tr className="h-[15px]">
          <th className="border-b border-r border-[#b4bac6] bg-[#dfe3ea] p-0">
            <svg viewBox="0 0 10 10" className="ml-[11px] h-2.5 w-2.5" aria-label="全选"><path d="M9 1v8H0z" fill="#b3bac6" /></svg>
          </th>
          {columns.map((c, i) => (
            <th
              key={c}
              className={clsx(
                'border-b border-r p-0 font-normal',
                i < 4 ? 'border-[#d0a035] border-b-[#6b5a2a] bg-linear-to-b from-[#ffd45a] to-[#ffe477]' : 'border-[#bcc2cc] bg-[#dfe3ea] text-[#555]'
              )}
            >
              {c}
            </th>
          ))}
        </tr>
      </thead>
      <tbody>
        {Array.from({ length: rowCount }, (_, r) => (
          <tr key={r} className="odd:h-[14px] even:h-[15px]">
            <th
              className={clsx(
                'border-b border-r p-0 font-normal',
                r < 7 ? 'border-[#d0a035] border-r-[#6b5a2a] bg-[#ffda63]' : 'border-[#bcc2cc] bg-[#dfe3ea] text-[#555]'
              )}
            >
              {r + 1}
            </th>
            {columns.map((c, i) => {
              const selected = r < data.length && i < 4;
              return (
                <td
                  key={c}
                  className={clsx(
                    'relative whitespace-nowrap border-b border-r p-0',
                    !selected && 'border-[#e0e2e5]',
                    selected && 'border-[#2f5878]',
                    selected && (r === 0 && i === 0 ? 'bg-white' : 'bg-[#a5cdef]'),
                    selected && i === 3 && 'border-r-2 border-r-[#333]',
                    selected && r === 6 && 'border-b-2 border-b-[#444]'
                  )}
                >
                  {selected && data[r][i]}
                  {r === 6 && i === 3 && <span className="absolute -bottom-[3px] -right-[3px] h-1 w-1 border-l border-t border-white bg-[#222]" />}
                </td>
              );
            })}
          </tr>
        ))}
      </tbody>
    </table>
  </div>
);

const SheetBar = () => (
  <div className="-mb-[10px] flex h-4 shrink-0 items-stretch border-t border-[#b4bac6] bg-[#dce0e8]">
    <div className="flex w-[43px] shrink-0 items-start gap-[6px] pl-[9px] pt-[3px]">
      <svg viewBox="0 0 6 8" className="h-2 w-1"><path d="M6 0v8L0 4z" fill="#333" /></svg>
      <svg viewBox="0 0 6 8" className="h-2 w-1"><path d="M0 0v8l6-4z" fill="#333" /></svg>
      <svg viewBox="0 0 8 8" className="h-2 w-2"><path d="M0 0v8l5-4zM6 0h1.5v8H6z" fill="#333" /></svg>
    </div>
    <button type="button" className="w-[47px] shrink-0 bg-white pl-1 text-left font-['Liberation_Mono',monospace] text-[11px] leading-[13px] text-[#555]">Sheet1</button>
    <button type="button" aria-label="插入工作表" className="flex w-4 items-start bg-white">
      <NewStyleIcon pivot />
    </button>
    <svg viewBox="0 0 10 15" className="h-[15px] w-2.5 shrink-0"><path d="M0 0h6L0 12z" fill="#fff" /><path d="M6 0 0 12" stroke="#a8aeb9" /></svg>
    <div className="ml-auto mr-5 flex w-[350px] items-start border-r border-[#a8aeb9] bg-[#f1f2f5] pl-2 pt-[2px]">
      <svg viewBox="0 0 6 8" className="h-2 w-1.5"><path d="M6 0v8L0 4z" fill="#333" /></svg>
    </div>
  </div>
);

/* ---------- site mark over the lower right corner ---------- */

const SiteMark = () => (
  <div className="pointer-events-none absolute right-[49px] top-[383px] z-30 w-[172px] text-white/80 [text-shadow:0_0_2px_#b0b0b0]">
    <div className="flex h-[55px] items-end">
      <span className="font-['Liberation_Sans',sans-serif] text-[38px] font-bold leading-[36px]">Bai</span>
      <div className="relative h-[55px] w-[46px] shrink-0">
        <svg viewBox="0 0 44 55" className="h-full w-full" aria-hidden="true">
          <g fill="#fff" fillOpacity=".8" stroke="#c6c6c6">
            <ellipse cx="16" cy="9" rx="6" ry="8" />
            <ellipse cx="30" cy="9" rx="6" ry="8" />
            <ellipse cx="6" cy="21" rx="5.5" ry="7" />
            <ellipse cx="38" cy="24" rx="5.5" ry="7" />
            <path d="M22 22c7 0 8 6 13 11 8 7 9 20-2 21-4 .5-7-1-11-1s-7 1.5-11 1C1 53 2 40 9 33c5-5 6-11 13-11z" />
          </g>
        </svg>
        <span className="absolute bottom-1 left-3 font-['Liberation_Sans',sans-serif] text-[18px] font-bold leading-5 text-[#3a5fa5]/70 [text-shadow:none]">du</span>
      </div>
      <span className="ml-0.5 text-[29px] font-bold leading-[34px]">经验</span>
    </div>
    <div className="mt-0.5 whitespace-nowrap font-['Noto_Sans',sans-serif] text-[19px] leading-6 text-white [text-shadow:0_0_2px_#a8a8a8]">jingyan.baidu.com</div>
  </div>
);

export default function App() {
  return (
    <div className="relative flex h-screen flex-col overflow-hidden bg-white font-['Noto_Sans_CJK_SC','Liberation_Sans',sans-serif] text-[9px] text-[#3b3b3b]">
      <TabBar />
      <Ribbon />
      <FormulaBar />
      <Worksheet />
      <SheetBar />
      <SiteMark />
    </div>
  );
}
